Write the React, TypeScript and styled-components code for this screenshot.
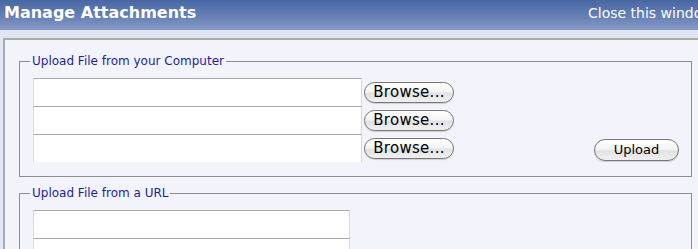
import styled, { createGlobalStyle } from 'styled-components'

const GlobalStyle = createGlobalStyle`
  html, body {
    margin: 0;
    padding: 0;
    overflow: hidden;
    background: #e1e4f1;
  }
`

function FileRow() {
  return (
    <Row>
      <TextInput type="text" $width={329} />
      <AquaButton type="button" $wide>Browse...</AquaButton>
    </Row>
  )
}

function App() {
  return (
    <Page>
      <GlobalStyle />
      <Header>
        <Title>Manage Attachments</Title>
        <CloseLink href="#">Close this window</CloseLink>
      </Header>
      <Band>
        <Panel>
          <Group>
            <Legend>Upload File from your Computer</Legend>
            <GroupBody>
              <Rows>
                <FileRow />
                <FileRow />
                <FileRow />
              </Rows>
              <UploadButton type="button">Upload</UploadButton>
            </GroupBody>
          </Group>
          <Group $mt={9}>
            <Legend>Upload File from a URL</Legend>
            <Rows>
              <TextInput type="text" $width={317} />
              <TextInput type="text" $width={317} />
            </Rows>
          </Group>
        </Panel>
      </Band>
    </Page>
  )
}

const Page = styled.div`
  width: 698px;
  height: 249px;
  overflow: hidden;
  font-family: 'DejaVu Sans', Verdana, sans-serif;
`

const Header = styled.div`
  height: 30px;
  box-sizing: border-box;
  padding-top: 3px;
  display: grid;
  grid-template-columns: 584px 1fr;
  background: linear-gradient(to bottom, #4767a4 0%, #6680b5 55%, #8699c5 100%);
  overflow: hidden;
`

const Title = styled.div`
  padding-left: 4px;
  font-size: 16px;
  font-weight: bold;
  line-height: 20px;
  color: #ffffff;
  white-space: nowrap;
`

// the link runs past the window edge, as in the original page
const CloseLink = styled.a`
  padding-left: 4px;
  font-size: 14px;
  line-height: 20px;
  color: #ffffff;
  text-decoration: none;
  white-space: nowrap;
`

const Band = styled.div`
  padding: 8px 0 0 3px;
`

const Panel = styled.div`
  background: #f3f3fb;
  border-top: 2px solid #ababab;
  border-left: 2px solid #ababab;
  padding: 14px 6px 20px 14px;
  height: 300px;
`

const Group = styled.fieldset<{ $mt?: number }>`
  margin: ${(p) => p.$mt ?? 0}px 0 0 0;
  padding: 10px 12px 14px 13px;
  border: 1px solid #8e8e8e;
  min-width: 0;
`

const Legend = styled.legend`
  margin-left: -3px;
  padding: 0 2px;
  font-size: 12px;
  line-height: 14px;
  color: #1e1e9e;
`

const GroupBody = styled.div`
  display: flex;
  align-items: flex-end;
  justify-content: space-between;
`

const Rows = styled.div`
  display: flex;
  flex-direction: column;
`

const Row = styled.div`
  display: flex;
  align-items: center;
  gap: 2px;
`

const TextInput = styled.input<{ $width: number }>`
  box-sizing: border-box;
  width: ${(p) => p.$width}px;
  height: 28px;
  margin: 0;
  padding: 2px 4px;
  background: #ffffff;
  border: none;
  border-top: 1px solid #a9a9a9;
  border-left: 1px solid #dadada;
  border-right: 1px solid #dadada;
  font-size: 13px;
  outline: none;
`

const AquaButton = styled.button<{ $wide?: boolean }>`
  box-sizing: border-box;
  width: ${(p) => (p.$wide ? 90 : 85)}px;
  height: ${(p) => (p.$wide ? 21 : 22)}px;
  margin: 0;
  padding: 0;
  border: 1px solid #777777;
  border-radius: 11px;
  background: linear-gradient(to bottom, #ffffff 0%, #f4f4f4 45%, #e2e2e2 55%, #f0f0f0 100%);
  box-shadow: 0 1px 1px rgba(0, 0, 0, 0.15);
  font-family: 'DejaVu Sans', Verdana, sans-serif;
  font-size: ${(p) => (p.$wide ? 15 : 13)}px;
  letter-spacing: ${(p) => (p.$wide ? 0.3 : 0)}px;
  line-height: 18px;
  color: #000000;
  cursor: pointer;
`

const UploadButton = styled(AquaButton)`
  margin-bottom: 1px;
`

export default App
